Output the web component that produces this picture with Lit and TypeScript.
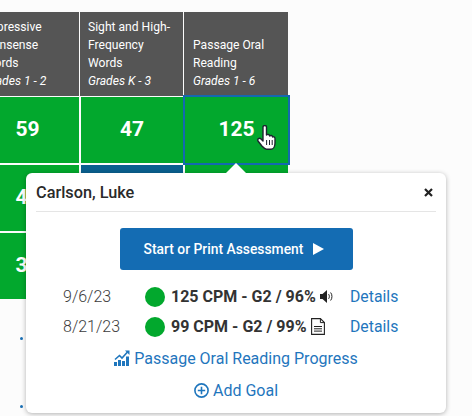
import { LitElement, html, css } from "lit";
import { customElement } from "lit/decorators.js";

@customElement("app-root")
export class AppRoot extends LitElement {
  static styles = css`
    :host { display: block; width: 472px; height: 416px; background: #fcfcfc; position: relative; overflow: hidden; font-family: Roboto, sans-serif; }
    .table { position: absolute; left: -24px; top: 12px; width: 312px; display: flex; flex-direction: column; gap: 1px; }
    .heads { display: grid; grid-template-columns: 103px 103px 104px; column-gap: 1px; }
    .cells { display: grid; grid-template-columns: 103px 102px 103px; gap: 2px; }
    .head { background: #555; height: 84px; color: #fff; font-size: 12.1px; line-height: 18px; padding: 0 8px 6px 9px; box-sizing: border-box; display: flex; flex-direction: column; justify-content: flex-end; }
    .head:first-child, .head:nth-child(2) { padding-left: 8px; }
    .head i { display: block; }
    .cell { background: #02a82d; color: #fff; font-weight: 700; font-size: 21px; padding-bottom: 3px; display: flex; align-items: center; justify-content: center; height: 66px; box-sizing: border-box; }
    .cell.blue { background: #0a608f; }
    .cell.sel { outline: 2px solid #1469b0; position: relative; z-index: 1; }
    .bullet { width: 3px; height: 3px; border-radius: 50%; background: #1a6fb5; position: absolute; left: 20px; }
    .bullet.one { top: 337px; }
    .bullet.two { top: 405px; }
    .hand { position: absolute; left: 257px; top: 125px; z-index: 1; }
    .pop { position: absolute; left: 26px; top: 173px; width: 420px; height: 240px; background: #fff; border-radius: 6px; box-shadow: 0 1px 5px rgba(0,0,0,.3); box-sizing: border-box; padding: 0 10px; color: #333; z-index: 2; }
    .arrow { position: absolute; left: 200px; top: -10px; width: 0; height: 0; border-left: 10px solid transparent; border-right: 10px solid transparent; border-bottom: 10px solid #fff; }
    .title { display: flex; justify-content: space-between; align-items: center; height: 38px; border-bottom: 1px solid #e5e5e5; font-weight: 500; font-size: 16.3px; color: #2a2a2a; }
    .close { margin-right: 3px; display: block; }
    .btn { margin: 16px auto 0; width: 233px; height: 42px; padding-right: 4px; box-sizing: border-box; background: #146cb3; border-radius: 3px; color: #fff; font-size: 13.85px; font-weight: 500; display: flex; align-items: center; justify-content: center; gap: 10px; }
    .rows { margin-top: 12px; display: grid; }
    .row { display: flex; align-items: center; height: 30px; font-size: 16px; }
    .date { width: 82px; margin-left: 27px; color: #3c3c3c; font-weight: 300; padding-bottom: 2px; }
    .ball { width: 20px; height: 20px; border-radius: 50%; background: #02a82d; margin-right: 6px; flex: none; }
    .res { font-weight: 700; font-size: 16px; color: #333; display: flex; align-items: center; gap: 4px; width: 179px; white-space: nowrap; padding-bottom: 2px; }
    a { color: #1f76bd; text-decoration: none; }
    .row a { padding-bottom: 2px; font-size: 15.8px; }
    .link { display: flex; align-items: center; justify-content: center; gap: 4px; font-size: 16px; height: 32px; }
    svg { display: block; flex: none; }
  `;
  render() {
    return html`<div class="table">
        <div class="heads">
          <div class="head"><span>Expressive Nonsense Words</span><i>Grades 1 - 2</i></div>
          <div class="head"><span>Sight and High-Frequency Words</span><i>Grades K - 3</i></div>
          <div class="head"><span>Passage Oral Reading</span><i>Grades 1 - 6</i></div>
        </div>
        <div class="cells">
          <div class="cell">59</div><div class="cell">47</div><div class="cell sel">125</div>
          <div class="cell">47</div><div class="cell blue"></div><div class="cell"></div>
          <div class="cell">37</div><div class="cell"></div><div class="cell"></div>
        </div>
      </div>
      <svg class="hand" width="19" height="25" viewBox="0 0 19 25">
        <path d="M6 2C6 0 9.5 0 9.5 2V10C10.5 9 12.5 9.3 12.7 11C13.7 10 15.4 10.4 15.6 12C16.5 11.3 18 11.8 18 13.5V18C18 21 16.6 24.2 14 24.2H9.5C7.5 24.2 6 22 4.5 20.5L1 16C0 14 2.5 12.5 4 14L6 16Z" fill="#fff" stroke="#1d2430" stroke-width="1.4" stroke-linejoin="round"/>
        <path d="M9.6 15V20M12.5 15V20M15.2 15V20" stroke="#1d2430" stroke-width="1" fill="none"/>
      </svg>
      <span class="bullet one"></span><span class="bullet two"></span>
      <div class="pop">
        <div class="arrow"></div>
        <div class="title"><span>Carlson, Luke</span><svg class="close" width="9" height="9" viewBox="0 0 9 9"><path d="M1 1L8 8M8 1L1 8" stroke="#222" stroke-width="2.2"/></svg></div>
        <div class="btn">Start or Print Assessment <svg width="11" height="12" viewBox="0 0 11 12"><path d="M0 0L11 6L0 12Z" fill="#fff"/></svg></div>
        <div class="rows">
          <div class="row"><span class="date">9/6/23</span><span class="ball"></span><span class="res">125 CPM - G2 / 96%
            <svg width="14" height="13" viewBox="0 0 14 13"><path d="M0 4H2.5L7 0V13L2.5 9H0Z" fill="#222"/><path d="M8.6 4.2C9.6 5.3 9.6 7.7 8.6 8.8M10.6 2.5C12.4 4.4 12.4 8.6 10.6 10.5" stroke="#222" stroke-width="1" fill="none"/></svg></span><a>Details</a></div>
          <div class="row"><span class="date">8/21/23</span><span class="ball"></span><span class="res">99 CPM - G2 / 99%
            <svg width="14" height="17" viewBox="0 0 14 17"><path d="M.6.6H9.4L13.4 4.6V16.4H.6Z" fill="#fff" stroke="#222" stroke-width="1.1"/><path d="M9.4.6V4.6H13.4M3 8.5H11M3 10.8H11M3 13.1H11" stroke="#222" stroke-width="1" fill="none"/></svg></span><a>Details</a></div>
        </div>
        <div class="link"><svg width="16" height="16" viewBox="0 0 16 16"><path d="M1 9.5L5.5 5.5L8 8L13.5 2" stroke="#1f76bd" stroke-width="1.6" fill="none"/><path d="M11 .5H15.5V5Z" fill="#1f76bd"/><path d="M0 12H3V16H0ZM4 10H7V16H4ZM8 11H11V16H8ZM12 6.5H15V16H12Z" fill="#1f76bd"/></svg><a>Passage Oral Reading Progress</a></div>
        <div class="link"><svg width="15" height="15" viewBox="0 0 15 15"><circle cx="7.5" cy="7.5" r="6.6" fill="none" stroke="#1f76bd" stroke-width="1.6"/><path d="M7.5 3.8V11.2M3.8 7.5H11.2" stroke="#1f76bd" stroke-width="1.6"/></svg><a>Add Goal</a></div>
      </div>`;
  }
}
